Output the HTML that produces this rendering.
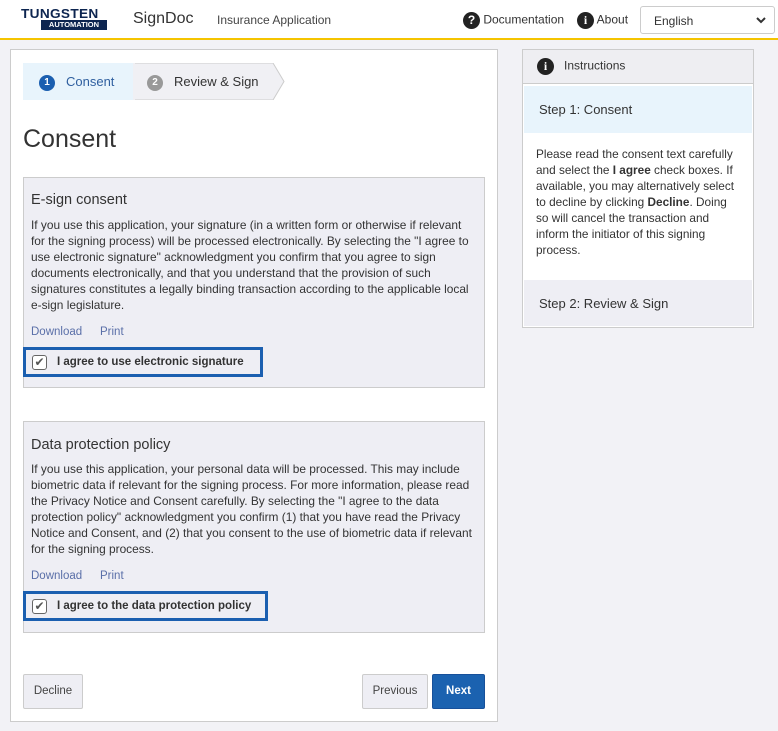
<!DOCTYPE html>
<html><head><style>
*{box-sizing:border-box;margin:0;padding:0}
body{width:778px;height:731px;background:#f2f2f6;font-family:"Liberation Sans",sans-serif;color:#333;position:relative;overflow:hidden}
.a{position:absolute}
.hdr{left:0;top:0;width:778px;height:40px;background:#fff;border-bottom:2px solid #f5c400}
.card{background:#fff;border:1px solid #ccc}
.box{background:#eeeef4;border:1px solid #ccc}
.txt{font-size:11.9px;line-height:16px;color:#333;white-space:nowrap}
.lnk{font-size:11.5px;color:#5a6fa8}
.chk{border:3px solid #1b5fb0;height:30px;background:#eeeef4}
.cb{position:absolute;left:6px;top:5px;width:15px;height:15px;border:1px solid #666;border-radius:3px;background:#fff;font-size:12px;line-height:13px;text-align:center;color:#555}
.cl{position:absolute;left:31px;top:6px;font-size:11.5px;font-weight:bold;color:#333}
.btn{border:1px solid #ccc;background:#eeeef4;font-size:11.5px;color:#444;text-align:center;line-height:33px;border-radius:2px}
.ic{display:inline-block;width:17px;height:17px;border-radius:50%;background:#222;color:#fff;font-weight:bold;font-size:12px;text-align:center;line-height:17px;vertical-align:middle}
</style></head><body>
<div class="a hdr">
 <div class="a" style="left:21px;top:8px;font-weight:900;font-size:13px;color:#0d2550;letter-spacing:0.3px;line-height:11px;transform:scaleX(1.05);transform-origin:left">TUNGSTEN</div>
 <div class="a" style="left:41px;top:20px;width:66px;height:10px;background:#0d2550;color:#fff;font-size:7.5px;font-weight:bold;line-height:10px;text-align:center">AUTOMATION</div>
 <div class="a" style="left:133px;top:10px;font-size:16px;color:#333">SignDoc</div>
 <div class="a" style="left:217px;top:13px;font-size:12px;color:#444">Insurance Application</div>
 <div class="a" style="left:463px;top:12px;font-size:12px;color:#333"><span class="ic">?</span> Documentation</div>
 <div class="a" style="left:577px;top:12px;font-size:12px;color:#333"><span class="ic" style="font-family:'Liberation Serif'">i</span> About</div>
 <div class="a" style="left:640px;top:6px;width:135px;height:28px;border:1px solid #ccc;border-radius:3px;font-size:12px;padding:7px 0 0 13px;color:#333">English<svg class="a" style="right:8px;top:10px" width="10" height="7"><path d="M1 1 L5 5 L9 1" stroke="#333" stroke-width="2" fill="none"/></svg></div>
</div>

<div class="a card" style="left:10px;top:49px;width:488px;height:673px"></div>
<div class="a" style="left:23px;top:63px;width:110px;height:37px;background:#e8f4fc"></div>
<svg class="a" style="left:133px;top:63px" width="152" height="37"><polygon points="0,0 140,0 151,18.5 140,37 0,37" fill="#f0f0f4" stroke="#ccc"/><rect x="0" y="0" width="2" height="37" fill="#f0f0f4"/></svg>
<div class="a" style="left:39px;top:75px;width:16px;height:16px;border-radius:50%;background:#1b5fb0;color:#fff;font-size:10px;font-weight:bold;text-align:center;line-height:16px">1</div>
<div class="a" style="left:66px;top:74px;font-size:13px;color:#2f5f9f">Consent</div>
<div class="a" style="left:147px;top:75px;width:16px;height:16px;border-radius:50%;background:#999;color:#fff;font-size:10px;font-weight:bold;text-align:center;line-height:16px">2</div>
<div class="a" style="left:174px;top:74px;font-size:13px;color:#333">Review &amp; Sign</div>
<div class="a" style="left:23px;top:125px;font-size:25px;color:#333">Consent</div>

<div class="a box" style="left:23px;top:177px;width:462px;height:211px"></div>
<div class="a" style="left:31px;top:192px;font-size:14.5px;color:#333">E-sign consent</div>
<div class="a txt" style="left:31px;top:217px">If you use this application, your signature (in a written form or otherwise if relevant<br>for the signing process) will be processed electronically. By selecting the "I agree to<br>use electronic signature" acknowledgment you confirm that you agree to sign<br>documents electronically, and that you understand that the provision of such<br>signatures constitutes a legally binding transaction according to the applicable local<br>e-sign legislature.</div>
<div class="a lnk" style="left:31px;top:326px">Download</div><div class="a lnk" style="left:100px;top:326px">Print</div>
<div class="a chk" style="left:23px;top:347px;width:240px"><div class="cb">✔</div><div class="cl">I agree to use electronic signature</div></div>

<div class="a box" style="left:23px;top:421px;width:462px;height:212px"></div>
<div class="a" style="left:31px;top:437px;font-size:14.5px;color:#333">Data protection policy</div>
<div class="a txt" style="left:31px;top:461px">If you use this application, your personal data will be processed. This may include<br>biometric data if relevant for the signing process. For more information, please read<br>the Privacy Notice and Consent carefully. By selecting the "I agree to the data<br>protection policy" acknowledgment you confirm (1) that you have read the Privacy<br>Notice and Consent, and (2) that you consent to the use of biometric data if relevant<br>for the signing process.</div>
<div class="a lnk" style="left:31px;top:570px">Download</div><div class="a lnk" style="left:100px;top:570px">Print</div>
<div class="a chk" style="left:23px;top:591px;width:245px"><div class="cb">✔</div><div class="cl">I agree to the data protection policy</div></div>

<div class="a btn" style="left:23px;top:674px;width:60px;height:35px">Decline</div>
<div class="a btn" style="left:362px;top:674px;width:66px;height:35px">Previous</div>
<div class="a btn" style="left:432px;top:674px;width:53px;height:35px;background:#1b62b0;border-color:#17509a;color:#fff;font-weight:bold">Next</div>

<div class="a card" style="left:522px;top:49px;width:232px;height:279px"></div>
<div class="a" style="left:523px;top:50px;width:230px;height:34px;background:#eeeef2;border-bottom:1px solid #ccc"></div>
<div class="a" style="left:537px;top:58px;font-size:12px;color:#333"><span class="ic" style="font-family:'Liberation Serif'">i</span>&nbsp;&nbsp; Instructions</div>
<div class="a" style="left:524px;top:86px;width:228px;height:47px;background:#e8f4fc"></div>
<div class="a" style="left:539px;top:102px;font-size:13px;color:#333">Step 1: Consent</div>
<div class="a txt" style="left:536px;top:146px;font-size:11.8px">Please read the consent text carefully<br>and select the <b>I agree</b> check boxes. If<br>available, you may alternatively select<br>to decline by clicking <b>Decline</b>. Doing<br>so will cancel the transaction and<br>inform the initiator of this signing<br>process.</div>
<div class="a" style="left:524px;top:280px;width:228px;height:46px;background:#eeeef4"></div>
<div class="a" style="left:539px;top:296px;font-size:13px;color:#333">Step 2: Review &amp; Sign</div>
</body></html>
